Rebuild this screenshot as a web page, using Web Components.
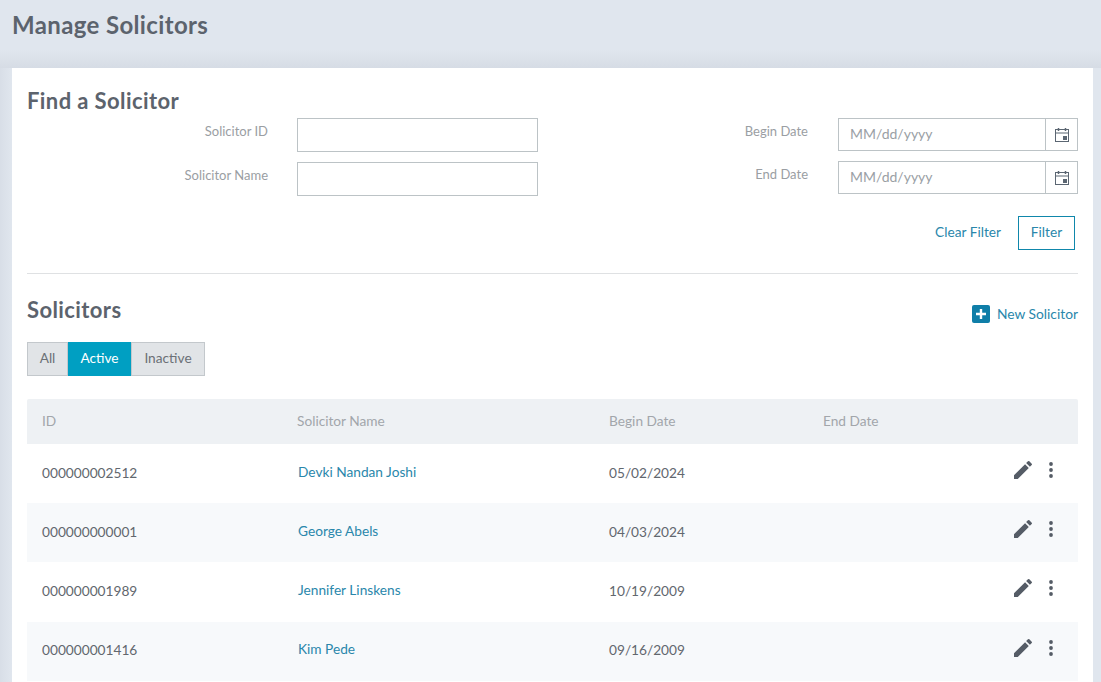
<!DOCTYPE html>
<html lang="en"><head><meta charset="utf-8"><title>Manage Solicitors</title>
<style>
html,body{margin:0;height:682px;overflow:hidden}
body{background:#e0e6ee;font-family:Lato,"Open Sans",sans-serif;color:#555c66}
</style></head><body>
<template id="t-page"><style>
:host{display:block;height:682px;overflow:hidden}
h1{margin:0;height:68px;box-sizing:border-box;padding:9px 12px 0;font:700 24px/32px Lato,sans-serif;letter-spacing:.36px;color:#5c636d;background:linear-gradient(#e0e6ee 0,#e0e6ee 50px,#d6dce5 68px)}
.wrap{padding:0 8px 0 12px;background:linear-gradient(90deg,#d8dee7 0,#e0e6ee 12px)}
.card{background:#fff;padding:15px 15px 0;height:700px}
</style><h1><slot name="title"></slot></h1><div class="wrap"><div class="card"><slot></slot></div></div></template>

<template id="t-filter"><style>
:host{display:block;border-bottom:1px solid #dfe1e3;height:191px;box-sizing:border-box}
h2{margin:0;font:700 22px/36px Lato,sans-serif;letter-spacing:.4px;color:#5c636d;height:35px}
.grid{display:grid;grid-template-columns:241px 241px 1fr 240px;column-gap:29px;row-gap:10px;align-items:start}
.actions{display:flex;justify-content:flex-end;align-items:center;gap:17px;margin:20px 3px 0 0}
a{color:#2a87ab;font-size:13.7px;position:relative;top:-2px}
button{all:unset;box-sizing:border-box;width:57px;height:34px;border:1px solid #0f87ab;color:#2a87ab;font:13.7px Lato,sans-serif;text-align:center;padding-bottom:3px}
</style><h2>Find a Solicitor</h2><div class="grid"><slot></slot></div>
<div class="actions"><a>Clear Filter</a><button>Filter</button></div></template>

<template id="t-field"><style>
:host{display:contents}
label{font:13px/17px Lato,sans-serif;color:#9a9ea3;text-align:right;padding-top:5px;white-space:nowrap}
:host([date]) label{padding-right:1px}
.text{box-sizing:border-box;height:34px;border:1px solid #bcc3c6}
.date{box-sizing:border-box;height:33px;border:1px solid #bcc3c6;display:flex}
:host([second]) .date{margin-top:-1px}
:host([second]) label{margin-top:-1px}
.ph{flex:1;color:#9aa0a5;font:14px/30px Lato,sans-serif;padding-left:11px;border-right:1px solid #bcc3c6}
.ic{width:31px;display:flex;align-items:center;justify-content:center}
</style><label><slot></slot></label><div id="box"></div></template>

<template id="t-list"><style>
:host{display:block}
.top{display:flex;justify-content:space-between;align-items:center;height:68px;box-sizing:border-box;padding-top:4px}
h2{margin:0;font:700 22px/28px Lato,sans-serif;letter-spacing:.4px;color:#5c636d}
.new{display:flex;align-items:center;gap:7px;color:#2a87ab;font-size:13.8px;padding-top:8px;line-height:18px}
.tabs{display:flex;height:34px}
.table{margin-top:23px}
</style><div class="top"><h2>Solicitors</h2><div class="new"><svg width="18" height="18" viewBox="0 0 18 18"><rect width="18" height="18" rx="2" fill="#0f7ea8"/><path d="M9 4v10M4 9h10" stroke="#fff" stroke-width="2.4"/></svg><span>New Solicitor</span></div></div>
<div class="tabs"><slot name="tabs"></slot></div><div class="table"><slot></slot></div></template>

<template id="t-tab"><style>
:host{display:block;box-sizing:border-box;background:#e1e4e7;border:1px solid #c3c8cc;color:#6b7076;font:13.7px/30px Lato,sans-serif;text-align:center}
:host([active]){background:#009fc2;border-color:#009fc2;color:#fff}
</style><slot></slot></template>

<template id="t-row"><style>
:host{display:grid;grid-template-columns:255px 312px 214px 1fr 100px;padding-left:15px;height:59.2px;box-sizing:border-box;padding-bottom:3px;align-items:center;font:13.7px Lato,sans-serif;color:#62676e}
:host([alt]){background:#f7f9fb}
:host([head]){background:#eef1f4;color:#a2a6ab;height:45px;padding-bottom:2px;border-radius:2px 2px 0 0}
:host([head]) .act{visibility:hidden}
.name{color:#2a87ab;position:relative;top:-1px;left:1px}
:host([head]) .name{color:inherit;top:0;left:0}
.act{display:flex;align-items:center;justify-content:flex-end;gap:14px;padding-right:25px;position:relative;top:-2px}
</style><div><slot name="id"></slot></div><div class="name"><slot name="name"></slot></div><div><slot name="begin"></slot></div><div><slot name="end"></slot></div>
<div class="act"><svg width="24" height="24" viewBox="0 0 24 24"><path fill="#555c66" d="M3 17.25V21h3.75L17.81 9.94l-3.75-3.75L3 17.25zM20.71 7.04a1 1 0 0 0 0-1.41l-2.34-2.34a1 1 0 0 0-1.41 0l-1.83 1.83 3.75 3.75 1.83-1.83z"/></svg><svg width="4" height="16" viewBox="0 0 4 16"><circle cx="2" cy="2" r="1.9" fill="#555c66"/><circle cx="2" cy="8" r="1.9" fill="#555c66"/><circle cx="2" cy="14" r="1.9" fill="#555c66"/></svg></div></template>

<sol-page>
<span slot="title">Manage Solicitors</span>
<sol-filter>
<sol-field>Solicitor ID</sol-field><sol-field date>Begin Date</sol-field>
<sol-field>Solicitor Name</sol-field><sol-field date second>End Date</sol-field>
</sol-filter>
<sol-list>
<sol-tab slot="tabs" style="width:41px">All</sol-tab><sol-tab slot="tabs" active style="width:63px">Active</sol-tab><sol-tab slot="tabs" style="width:74px">Inactive</sol-tab>
<sol-row head><span slot="id">ID</span><span slot="name">Solicitor Name</span><span slot="begin">Begin Date</span><span slot="end">End Date</span></sol-row>
<sol-row><span slot="id">000000002512</span><span slot="name">Devki Nandan Joshi</span><span slot="begin">05/02/2024</span></sol-row>
<sol-row alt><span slot="id">000000000001</span><span slot="name">George Abels</span><span slot="begin">04/03/2024</span></sol-row>
<sol-row><span slot="id">000000001989</span><span slot="name">Jennifer Linskens</span><span slot="begin">10/19/2009</span></sol-row>
<sol-row alt><span slot="id">000000001416</span><span slot="name">Kim Pede</span><span slot="begin">09/16/2009</span></sol-row>
</sol-list>
</sol-page>
<script>
const mk=(name,id)=>customElements.define(name,class extends HTMLElement{
 constructor(){super();this.attachShadow({mode:'open'}).appendChild(document.getElementById(id).content.cloneNode(true));}
});
mk('sol-page','t-page');mk('sol-list','t-list');mk('sol-tab','t-tab');mk('sol-row','t-row');mk('sol-filter','t-filter');
const cal='<svg width="16" height="16" viewBox="0 0 16 16" fill="none"><rect x="1.5" y="2.5" width="13" height="12" stroke="#5b6672"/><path d="M1.5 6h13M1.5 14.5h13" stroke="#5b6672" stroke-width="1.2"/><path d="M4.5 1v3M11.5 1v3" stroke="#5b6672" stroke-width="1.5"/><rect x="9" y="9" width="4" height="4" fill="#5b6672"/></svg>';
customElements.define('sol-field',class extends HTMLElement{constructor(){super();const r=this.attachShadow({mode:'open'});r.appendChild(document.getElementById('t-field').content.cloneNode(true));const b=r.getElementById('box');if(this.hasAttribute('date')){b.className='date';b.innerHTML='<div class="ph">MM/dd/yyyy</div><div class="ic">'+cal+'</div>';}else b.className='text';}});
</script>
</body></html>
